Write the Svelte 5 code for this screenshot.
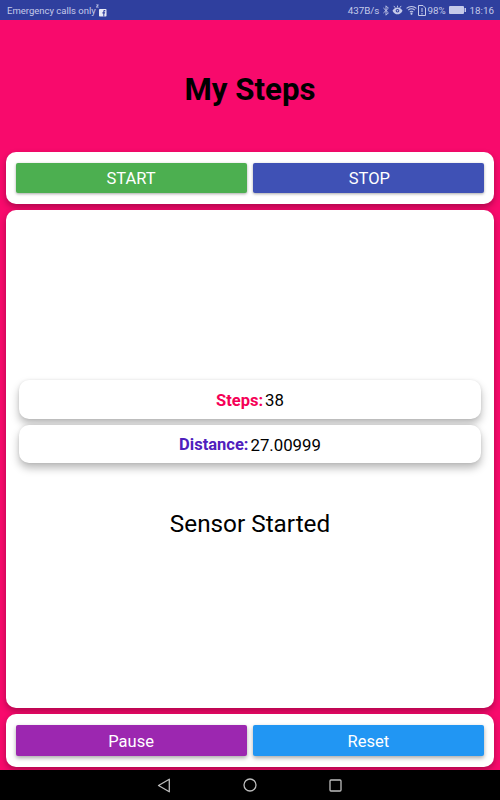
<script>
  const stats = [
    { label: 'Steps:', value: '38', cls: 'pink' },
    { label: 'Distance:', value: '27.00999', cls: 'indigo' }
  ];
</script>

<div class="screen">
  <div class="status">
    <div class="status-left">
      <span class="carrier">Emergency calls only</span>
      <svg class="sim" width="11" height="13" viewBox="0 0 11 13">
        <rect x="3" y="5" width="7.500" height="7.500" rx="0.800" fill="#e8eaf6"/>
        <path d="M7.300 12.500V9.400H6.400V8.200h.9V7.400c0-.9.500-1.300 1.200-1.300h.8v1.100h-.5c-.3 0-.5.100-.5.400v.6h.9l-.2 1.200h-.7v3.100z" fill="#303f9f"/>
        <path d="M0.200 0.500h2.400v.7L1.300 2.800h1.400v.7H.1v-.7l1.400-1.600H.2z" fill="#c5cae9"/>
      </svg>
    </div>
    <div class="status-right">
      <span class="speed">437B/s</span>
      <svg class="bt" width="6" height="11" viewBox="0 0 6 11" fill="none" stroke="#c5cae9" stroke-width="0.900"><path d="M.4 3l5 4.800L3 10.200V.8L5.400 3.200.4 8"/></svg>
      <svg class="eye" width="11" height="11" viewBox="0 0 12 11"><path d="M.5 5.800C2 3.200 4 2.200 6 2.200s4 1 5.500 3.600C10 8.700 8 9.700 6 9.700s-4-1-5.500-3.900z" fill="#c5cae9"/><circle cx="6" cy="5.800" r="2" fill="#303f9f"/><circle cx="6" cy="5.800" r=".9" fill="#c5cae9"/><path d="M2 .5l1.500 2M10 .5L8.500 2.500M6 .2v1.800" stroke="#c5cae9"/></svg>
      <svg class="wifi" width="11" height="10" viewBox="0 0 12 10" fill="none" stroke="#c5cae9" stroke-width="1.100"><path d="M.6 3.200a8 8 0 0 1 10.800 0M2.400 5.200a5.200 5.200 0 0 1 7.200 0M4.200 7.200a2.600 2.600 0 0 1 3.600 0"/><circle cx="6" cy="9" r=".6" fill="#c5cae9"/></svg>
      <svg class="save" width="8" height="11" viewBox="0 0 8 11" fill="none" stroke="#c5cae9" stroke-width="1"><path d="M.5.500h4.500l2.500 2.500v7.500h-7z"/><path d="M4 3v4M4 8v1.500"/></svg>
      <span class="pct">98%</span>
      <svg class="batt" width="17" height="8" viewBox="0 0 17 8"><rect width="15" height="8" rx="1" fill="#c5cae9"/><rect x="15.500" y="2" width="1.500" height="4" fill="#c5cae9"/></svg>
      <span class="time">18:16</span>
    </div>
  </div>

  <header class="header"><h1>My Steps</h1></header>

  <section class="card actions">
    <button class="btn green">START</button>
    <button class="btn blue">STOP</button>
  </section>

  <section class="card main">
    <div class="stats">
      {#each stats as s}
        <div class="stat">
          <span class="label {s.cls}">{s.label}</span>
          <span class="value">{s.value}</span>
        </div>
      {/each}
    </div>
    <p class="message">Sensor Started</p>
  </section>

  <section class="card actions bottom">
    <button class="btn purple">Pause</button>
    <button class="btn sky">Reset</button>
  </section>

  <nav class="nav">
    <svg width="14" height="15" viewBox="0 0 14 15" fill="none" stroke="#bdbdbd" stroke-width="1.300"><path d="M12.300 1.200v12.600L1.500 7.500z" stroke-linejoin="round"/></svg>
    <svg width="14" height="14" viewBox="0 0 14 14" fill="none" stroke="#bdbdbd" stroke-width="1.300"><circle cx="7" cy="7" r="6"/></svg>
    <svg width="13" height="13" viewBox="0 0 13 13" fill="none" stroke="#bdbdbd" stroke-width="1.300"><rect x="1" y="1" width="11" height="11" rx="1"/></svg>
  </nav>
</div>

<style>
  :global(body) { margin: 0; }
  .screen {
    width: 500px;
    height: 800px;
    display: flex;
    flex-direction: column;
    overflow: hidden;
    font-family: Roboto, sans-serif;
    background: #f80a6c;
  }
  .status {
    height: 20px;
    flex: none;
    background: #2f3f9e;
    color: #c5cae9;
    font-size: 9.800px;
    display: flex;
    justify-content: space-between;
    align-items: center;
    padding: 0 6px 0 7px;
  }
  .status-left, .status-right { display: flex; align-items: center; }
  .carrier { font-size: 9.500px; }
  .bt { margin-left: 4px; }
  .eye { margin-left: 3px; }
  .wifi { margin-left: 3px; }
  .save { margin-left: 1px; }
  .pct { margin-left: 1px; }
  .batt { margin-left: 3px; }
  .time { margin-left: 4px; }
  .header {
    height: 132px;
    flex: none;
    display: flex;
    align-items: center;
    justify-content: center;
  }
  h1 {
    margin: 0;
    font-size: 31.200px;
    font-weight: 700;
    color: #000;
    position: relative;
    top: 3px;
  }
  .card {
    background: #fff;
    border-radius: 10px;
    margin: 0 6px;
    box-shadow: 0 3px 6px rgba(0, 0, 0, 0.3);
  }
  .actions {
    height: 52px;
    flex: none;
    display: flex;
    align-items: center;
    gap: 6px;
    padding: 0 10px 0 9.500px;
    box-sizing: border-box;
  }
  .bottom { height: 53px; margin-bottom: 3px; }
  .btn {
    flex: 1 1 0;
    min-width: 0;
    height: 30px;
    border: 0;
    border-radius: 2px;
    color: #fff;
    font: 400 16.500px Roboto, sans-serif;
    box-shadow: 0 1px 3px rgba(0,0,0,0.35);
    padding: 0;
  }
  .blue { text-indent: 2px; }
  .bottom .btn { height: 31px; padding-top: 2px; box-shadow: 0 2px 4px rgba(0,0,0,0.35); }
  .green { background: #4caf50; }
  .blue { background: #3f51b5; }
  .purple { background: #9c27b0; }
  .sky { background: #2196f3; }
  .main {
    flex: 1;
    margin-top: 6px;
    margin-bottom: 6px;
    display: flex;
    flex-direction: column;
    padding: 170px 13px 0;
  }
  .stats {
    display: flex;
    flex-direction: column;
    gap: 6px;
  }
  .stat {
    height: 38.500px;
    background: #fff;
    border-radius: 10px;
    display: flex;
    align-items: center;
    justify-content: center;
    gap: 2px;
    font-size: 16.500px;
    padding-top: 2px;
    box-sizing: border-box;
    box-shadow: 0 5px 8px rgba(0,0,0,0.28), 0 0 3px rgba(0,0,0,0.08);
  }
  .label { font-weight: 700; }
  .value { color: #000; font-size: 16.800px; }
  .pink { color: #f50057; }
  .indigo { color: #4f20bd; }
  .message {
    margin: 47px 0 0;
    text-align: center;
    font-size: 24.300px;
    line-height: 28px;
    color: #000;
  }
  .nav {
    height: 30px;
    flex: none;
    background: #000;
    display: flex;
    align-items: center;
    justify-content: center;
    gap: 72px;
    padding-right: 2px;
    box-sizing: border-box;
  }
</style>
